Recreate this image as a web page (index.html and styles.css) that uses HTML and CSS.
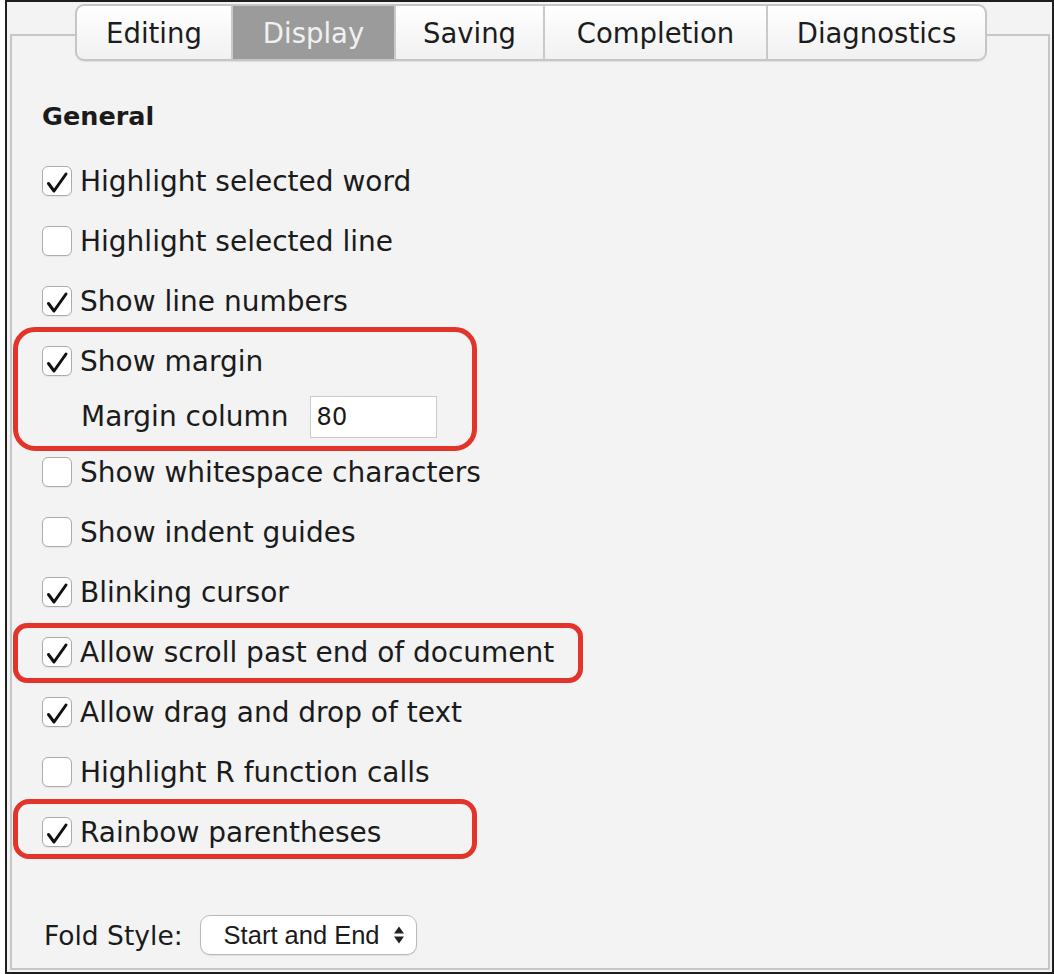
FILE: index.html
```html
<!DOCTYPE html>
<html>
<head>
<meta charset="utf-8">
<title>Display options</title>
<link rel="stylesheet" href="styles.css">
</head>
<body>
<div class="frame">
  <div class="tabs">
    <div class="tab">Editing</div>
    <div class="tab tab-active">Display</div>
    <div class="tab">Saving</div>
    <div class="tab">Completion</div>
    <div class="tab">Diagnostics</div>
  </div>
  <div class="panel">
    <div class="section-title">General</div>
    <div class="options">
      <div class="option"><span class="cb"><svg viewBox="0 0 27 27"><path d="M5.5 16.5 L11 24 L23 7"/></svg></span><span class="label">Highlight selected word</span></div>
      <div class="option"><span class="cb"></span><span class="label">Highlight selected line</span></div>
      <div class="option"><span class="cb"><svg viewBox="0 0 27 27"><path d="M5.5 16.5 L11 24 L23 7"/></svg></span><span class="label">Show line numbers</span></div>
      <div class="annot annot-margin">
        <div class="option"><span class="cb"><svg viewBox="0 0 27 27"><path d="M5.5 16.5 L11 24 L23 7"/></svg></span><span class="label">Show margin</span></div>
        <div class="suboption"><span class="label">Margin column</span><span class="num-input">80</span></div>
      </div>
      <div class="option"><span class="cb"></span><span class="label">Show whitespace characters</span></div>
      <div class="option"><span class="cb"></span><span class="label">Show indent guides</span></div>
      <div class="option"><span class="cb"><svg viewBox="0 0 27 27"><path d="M5.5 16.5 L11 24 L23 7"/></svg></span><span class="label">Blinking cursor</span></div>
      <div class="annot annot-scroll">
        <div class="option"><span class="cb"><svg viewBox="0 0 27 27"><path d="M5.5 16.5 L11 24 L23 7"/></svg></span><span class="label">Allow scroll past end of document</span></div>
      </div>
      <div class="option"><span class="cb"><svg viewBox="0 0 27 27"><path d="M5.5 16.5 L11 24 L23 7"/></svg></span><span class="label">Allow drag and drop of text</span></div>
      <div class="option"><span class="cb"></span><span class="label">Highlight R function calls</span></div>
      <div class="annot annot-rainbow">
        <div class="option"><span class="cb"><svg viewBox="0 0 27 27"><path d="M5.5 16.5 L11 24 L23 7"/></svg></span><span class="label">Rainbow parentheses</span></div>
      </div>
    </div>
    <div class="fold">
      <span class="label">Fold Style:</span>
      <div class="select"><span>Start and End</span><svg class="arrows" viewBox="0 0 10 18"><path d="M0 7.5 L5 0.5 L10 7.5 Z M0 10.5 L10 10.5 L5 17.5 Z"/></svg></div>
    </div>
  </div>
</div>
</body>
</html>
```

FILE: styles.css
```css
body {
  margin: 0;
  background: #ffffff;
  font-family: "DejaVu Sans", "Noto Sans", sans-serif;
  color: #1b1b1b;
}

.frame {
  margin-left: 5px;
  width: 1049px;
  height: 974px;
  box-sizing: border-box;
  border: 2px solid #1e1e1e;
  background: #f2f3f2;
  padding-top: 2px;
}

.tabs {
  position: relative;
  z-index: 1;
  margin-left: 68px;
  width: 912px;
  height: 57px;
  box-sizing: border-box;
  display: grid;
  grid-template-columns: 154px 163px 149px 223px 219px;
  border: 2px solid #c6c6c6;
  border-radius: 9px;
  overflow: hidden;
  background: linear-gradient(#ffffff, #f1f1f1);
  box-shadow: 0 1px 1px rgba(0, 0, 0, 0.08);
}

.tab {
  display: flex;
  align-items: center;
  justify-content: center;
  font-size: 27.5px;
  color: #1c1c1c;
}

.tab + .tab {
  border-left: 2px solid #c9c9c9;
}

.tab-active {
  background: #9b9b9b;
  color: #f1f1f1;
}

.panel {
  margin: -27px 2px 0 3px;
  height: 936px;
  box-sizing: border-box;
  border: 2px solid #c6c6c6;
  padding: 64px 30px 0;
}

.section-title {
  font-weight: bold;
  font-size: 25.5px;
  line-height: 32px;
  margin-bottom: 19px;
}

.option {
  display: flex;
  align-items: center;
  height: 60px;
  font-size: 28px;
}

.cb {
  flex: none;
  width: 30px;
  height: 30px;
  box-sizing: border-box;
  border: 1.5px solid #acacac;
  border-radius: 6px;
  background: #ffffff;
  margin-right: 8px;
  box-shadow: 0 1px 1px rgba(0, 0, 0, 0.06);
}

.cb svg {
  display: block;
  width: 27px;
  height: 27px;
  overflow: visible;
}

.cb path {
  fill: none;
  stroke: #111111;
  stroke-width: 3;
  stroke-linecap: round;
  stroke-linejoin: round;
}

.suboption {
  display: flex;
  align-items: center;
  height: 51px;
  padding-left: 39px;
  font-size: 28px;
}

.num-input {
  margin-left: 21px;
  width: 127px;
  height: 42px;
  box-sizing: border-box;
  border: 1px solid #cacaca;
  background: #ffffff;
  font-size: 24px;
  padding-left: 6px;
  display: flex;
  align-items: center;
}

.annot {
  position: relative;
}

.annot::after {
  content: "";
  position: absolute;
  box-sizing: border-box;
  border: 5px solid #e3342b;
  pointer-events: none;
}

.annot-margin::after {
  left: -29px;
  top: -4px;
  width: 464px;
  height: 124px;
  border-radius: 22px;
}

.annot-scroll::after {
  left: -29px;
  top: 1px;
  width: 570px;
  height: 60px;
  border-radius: 14px;
}

.annot-rainbow::after {
  left: -29px;
  top: -3px;
  width: 464px;
  height: 60px;
  border-radius: 16px;
}

.fold {
  display: flex;
  align-items: center;
  height: 60px;
  margin-top: 43px;
  padding-left: 2px;
  font-size: 26.5px;
}

.select {
  margin-left: 17px;
  width: 217px;
  height: 40px;
  box-sizing: border-box;
  border: 1.5px solid #b9b9b9;
  border-radius: 10px;
  background: #ffffff;
  display: flex;
  align-items: center;
  padding: 0 12px 0 23px;
  font-family: "Liberation Sans", Arial, sans-serif;
  font-size: 25.5px;
  color: #1b1b1b;
  box-shadow: 0 1px 1px rgba(0, 0, 0, 0.08);
}

.arrows {
  margin-left: auto;
  width: 10px;
  height: 18px;
  fill: #222222;
}
```
